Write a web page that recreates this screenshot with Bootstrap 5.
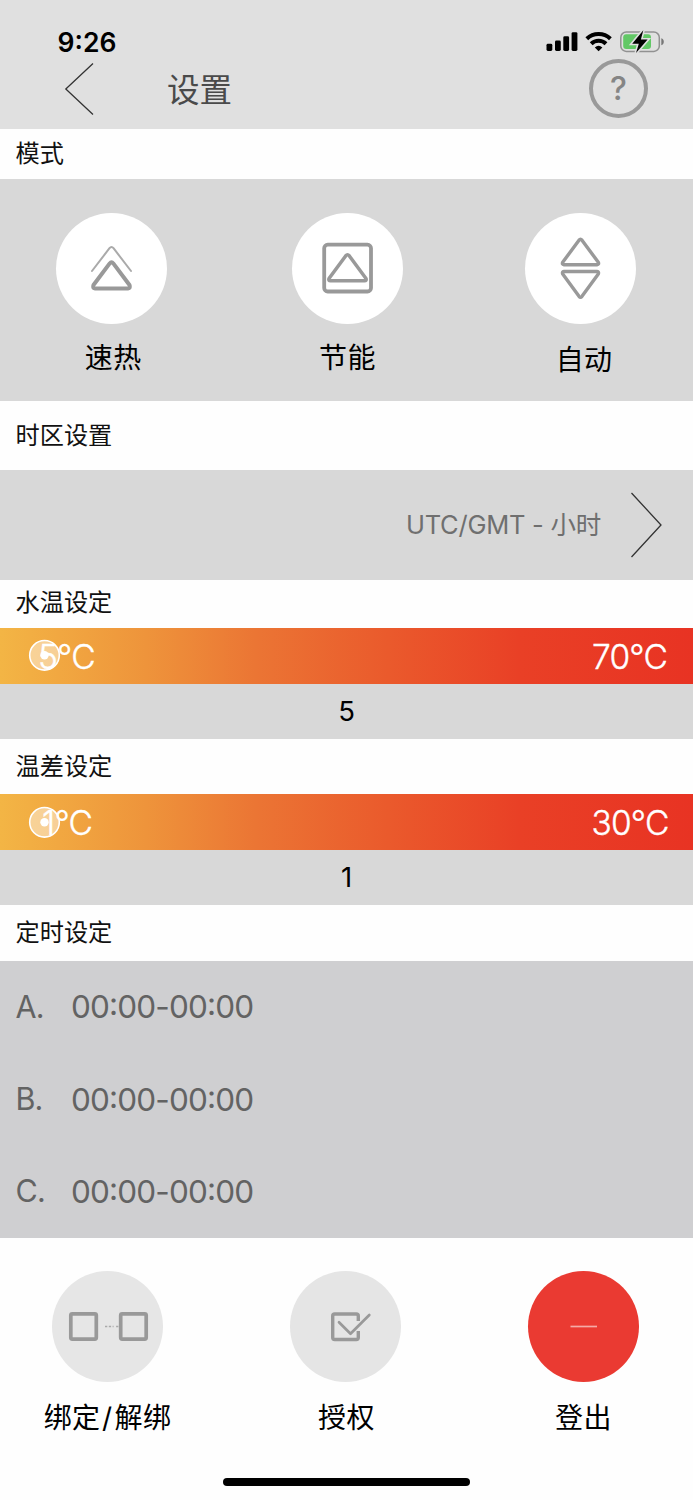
<!DOCTYPE html>
<html lang="zh-CN">
<head>
<meta charset="utf-8">
<meta name="viewport" content="width=device-width, initial-scale=1">
<title>设置</title>
<link href="https://cdn.jsdelivr.net/npm/bootstrap@5.3.0/dist/css/bootstrap.min.css" rel="stylesheet">
<style>
  body { font-family: Inter, "Noto Sans CJK SC", sans-serif; color: #000; background: #fefefe; line-height: 1; }
  .screen { width: 693px; height: 1500px; overflow: hidden; }
  .topbar { height: 129px; background: #e0e0e0; }
  .status { height: 58px; padding: 26px 29px 0 57.5px; }
  .clock { font-size: 26.5px; font-weight: 600; line-height: 32px; }
  .navrow { height: 62px; padding: 0 45px 0 64px; }
  .page-name { font-size: 32.5px; color: #4a4a4a; margin-left: 72px; font-weight: 400; padding-top: 2px; }
  .help { width: 59px; height: 59px; border: 4px solid #999; border-radius: 50%; color: #858585; font-size: 32px; font-weight: 500; margin-bottom: 1px; }
  .sec-title { font-size: 24.2px; font-weight: 400; padding-left: 15.500px; margin: 0; color: #111; }
  .panel { background: #d8d8d8; }
  .disc { width: 111px; height: 111px; border-radius: 50%; }
  .item { width: 111px; }
  .item-label { font-size: 28px; letter-spacing: .4px; white-space: nowrap; line-height: 32px; }
  .modes { height: 221.600px; padding: 33.300px 0 0 55.700px; }
  .modes .item-label { margin-top: 18px; }
  .zone { height: 110px; padding: 0 30px 0 0; font-size: 25.5px; color: #6f6f6f; letter-spacing: -.25px; }
  .heat { padding: 3px 26px 0 38px; font-size: 33.5px; font-weight: 300; color: #fff; letter-spacing: -.8px;
    background: linear-gradient(90deg, #f3b545 0, #ee943b 21%, #eb7534 37%, #ea5a2c 56%, #e94026 75%, #e83323 100%); }
  .heat span { position: relative; z-index: 1; -webkit-text-stroke: .4px #fff; }
  .knob { left: 28px; top: 11.500px; }
  .reading { height: 55px; font-size: 27.500px; }
  .timers { height: 277px; background: #cfcfd1; padding-left: 15.500px; color: #636363; }
  .timer { height: 92.3px; font-size: 31.500px; letter-spacing: -.85px; }
  .timer i { font-style: normal; font-feature-settings: "case"; }
  .timer-key { width: 55.500px; font-size: 30.500px; }
  .actions { padding: 32.700px 0 0 52px; gap: 127px; }
  .actions .item-label { margin-top: 20px; }
  .bind-slash { margin: 0 2px 0 1.500px; }
  .home-bar { width: 247px; height: 8px; border-radius: 4px; background: #000; margin: 44.500px auto 0; }
</style>
</head>
<body>
<main class="screen">
  <header class="topbar">
    <div class="status d-flex justify-content-between">
      <span class="clock">9:26</span>
      <svg width="119" height="30" viewBox="545 26 119 30" aria-hidden="true">
        <rect x="546.5" y="43.8" width="5.8" height="7.2" rx="1.4"/>
        <rect x="555" y="40.5" width="5.8" height="10.5" rx="1.4"/>
        <rect x="563.3" y="36.3" width="5.8" height="14.7" rx="1.4"/>
        <rect x="571.6" y="32.2" width="5.8" height="18.8" rx="1.4"/>
        <g fill="none" stroke="#000" stroke-width="4">
          <path d="M586.8 38.7a17 17 0 0 1 23.600 0"/>
          <path d="M591.2 43.8a10.600 10.600 0 0 1 14.800 0"/>
        </g>
        <path d="M594.8 47.4a5.8 5.8 0 0 1 7.600 0l-3.8 3.900z"/>
        <rect x="620.8" y="32" width="38.500" height="19.400" rx="5.500" fill="none" stroke="#919191" stroke-width="1.500"/>
        <path d="M661.3 38.2c3.300.8 3.300 6.200 0 7z" fill="#777"/>
        <rect x="623.2" y="34.300" width="27.800" height="14.800" rx="3" fill="#62c866"/>
        <path d="M643.300 30.200 632.200 43.700h6.600l-2.800 9.200 11.600-13.400h-6.700z" stroke="#e0e0e0" stroke-width="3.200" paint-order="stroke"/>
      </svg>
    </div>
    <nav class="navrow d-flex align-items-center">
      <svg width="31" height="54" viewBox="0 0 31 54" fill="none" stroke="#333" stroke-width="1.300"><path d="M29 1.500 1.800 27 29 52.500"/></svg>
      <h1 class="page-name mb-0">设置</h1>
      <div class="help ms-auto d-flex align-items-center justify-content-center">?</div>
    </nav>
  </header>

  <h2 class="sec-title d-flex align-items-center" style="height:50.400px;padding-bottom:2px">模式</h2>
  <section class="panel modes d-flex align-items-start">
    <div class="item d-flex flex-column align-items-center">
      <div class="disc bg-white"><svg width="111" height="111" viewBox="56 213 111 111" fill="none" stroke="#999" stroke-linejoin="round" stroke-linecap="round">
        <path stroke-width="2" stroke="#aaa" d="M92 271 109.500 248.200q2-2.400 4 0L131 271"/>
        <path stroke-width="4" d="M109.700 263.400q1.800-2.200 3.600 0L129.500 285q1.300 3.300-1.500 3.500H95q-2.800-.2-1.500-3.500z"/></svg></div>
      <div class="item-label ps-1">速热</div>
    </div>
    <div class="item d-flex flex-column align-items-center" style="margin-left:125.300px">
      <div class="disc bg-white"><svg width="111" height="111" viewBox="292.500 213 111 111" fill="none" stroke="#999" stroke-linejoin="round">
        <rect x="324.700" y="244.700" width="46.800" height="46.800" rx="3.500" stroke-width="3.800"/>
        <path stroke-width="3.500" d="M346.300 255.700q1.700-2 3.400 0L366.500 278.500q.8 2.300-1.500 2.300H331q-2.300 0-1.500-2.300z"/></svg></div>
      <div class="item-label">节能</div>
    </div>
    <div class="item d-flex flex-column align-items-center" style="margin-left:121.600px">
      <div class="disc bg-white"><svg width="111" height="111" viewBox="524.500 213 111 111" fill="none" stroke="#999" stroke-width="3.400" stroke-linejoin="round">
        <path d="M578.500 240.200q1.500-1.800 3 0L597.800 262.300q1 2.200-1.300 2.500h-33q-2.300-.3-1.300-2.500z"/>
        <path d="M578.500 296.300q1.500 1.800 3 0L597.800 274q1-2.200-1.300-2.500h-33q-2.300.3-1.300 2.500z"/></svg></div>
      <div class="item-label ps-2" style="margin-top:20px">自动</div>
    </div>
  </section>

  <h2 class="sec-title d-flex align-items-center" style="height:69px">时区设置</h2>
  <section class="panel zone d-flex align-items-center justify-content-end">
    <span>UTC/GMT - 小时</span>
    <svg class="ms-4" width="38" height="68" viewBox="0 0 38 68" fill="none" stroke="#333" stroke-width="1.300"><path d="M6.500 2 36 34 6.500 66"/></svg>
  </section>

  <h2 class="sec-title d-flex align-items-center" style="height:48px;padding-bottom:3px">水温设定</h2>
  <div class="heat position-relative d-flex align-items-center justify-content-between" style="height:56px">
    <span>5°C</span><span>70°C</span>
    <svg class="knob position-absolute" width="33" height="33" viewBox="0 0 33 33"><circle cx="16.500" cy="16.300" r="14.800" fill="#fff" fill-opacity=".45" stroke="#fff" stroke-width="1.600"/><circle cx="16.500" cy="16.300" r="4.200" fill="#fff"/></svg>
  </div>
  <div class="panel reading d-flex align-items-center justify-content-center">5</div>

  <h2 class="sec-title d-flex align-items-center" style="height:55.400px;padding-bottom:1px">温差设定</h2>
  <div class="heat position-relative d-flex align-items-center justify-content-between" style="height:55.500px">
    <span class="ms-1">1°C</span><span style="margin-right:-1.500px">30°C</span>
    <svg class="knob position-absolute" width="33" height="33" viewBox="0 0 33 33"><circle cx="16.500" cy="16.300" r="14.800" fill="#fff" fill-opacity=".45" stroke="#fff" stroke-width="1.600"/><circle cx="16.500" cy="16.300" r="4.200" fill="#fff"/></svg>
  </div>
  <div class="panel reading d-flex align-items-center justify-content-center">1</div>

  <h2 class="sec-title d-flex align-items-center" style="height:56px;padding-bottom:1px">定时设定</h2>
  <section class="timers">
    <div class="timer d-flex align-items-center"><span class="timer-key">A.</span><span>00<i>:</i>00-00<i>:</i>00</span></div>
    <div class="timer d-flex align-items-center"><span class="timer-key">B.</span><span>00<i>:</i>00-00<i>:</i>00</span></div>
    <div class="timer d-flex align-items-center"><span class="timer-key">C.</span><span>00<i>:</i>00-00<i>:</i>00</span></div>
  </section>

  <section class="actions d-flex">
    <div class="item d-flex flex-column align-items-center">
      <div class="disc" style="background:#e6e6e6"><svg width="111" height="111" viewBox="52 1270.500 111 111" fill="none" stroke="#999" stroke-width="3.700">
        <rect x="70.800" y="1313.300" width="25.500" height="25.300" rx="1.500"/><rect x="120.700" y="1313.300" width="25.500" height="25.300" rx="1.500"/>
        <path stroke="#aaa" stroke-width="1.300" stroke-dasharray="2.300 1.500 2.300 1.500 1 2.500" d="M105 1326h14"/></svg></div>
      <div class="item-label">绑定<span class="bind-slash">/</span>解绑</div>
    </div>
    <div class="item d-flex flex-column align-items-center">
      <div class="disc" style="background:#e5e5e5"><svg width="111" height="111" viewBox="290 1270.500 111 111" fill="none" stroke="#999" stroke-width="3.400" stroke-linejoin="round">
        <path d="M358.300 1320.500V1315.500q0-2-2-2H334.700q-2 0-2 2V1337q0 2 2 2H356.300q2 0 2-2V1330.500"/>
        <path stroke-width="2.700" stroke-linecap="round" d="m339 1321.700 11.500 11.500L369.300 1314.500"/></svg></div>
      <div class="item-label" style="padding-left:2px">授权</div>
    </div>
    <div class="item d-flex flex-column align-items-center">
      <div class="disc" style="background:#ea3a32"><svg width="111" height="111" viewBox="0 0 111 111"><path d="M42.500 55.500h26.500" stroke="#f5aaa6" stroke-width="1.700"/></svg></div>
      <div class="item-label">登出</div>
    </div>
  </section>
  <div class="home-bar"></div>
</main>
<script src="https://cdn.jsdelivr.net/npm/bootstrap@5.3.0/dist/js/bootstrap.bundle.min.js"></script>
</body>
</html>
